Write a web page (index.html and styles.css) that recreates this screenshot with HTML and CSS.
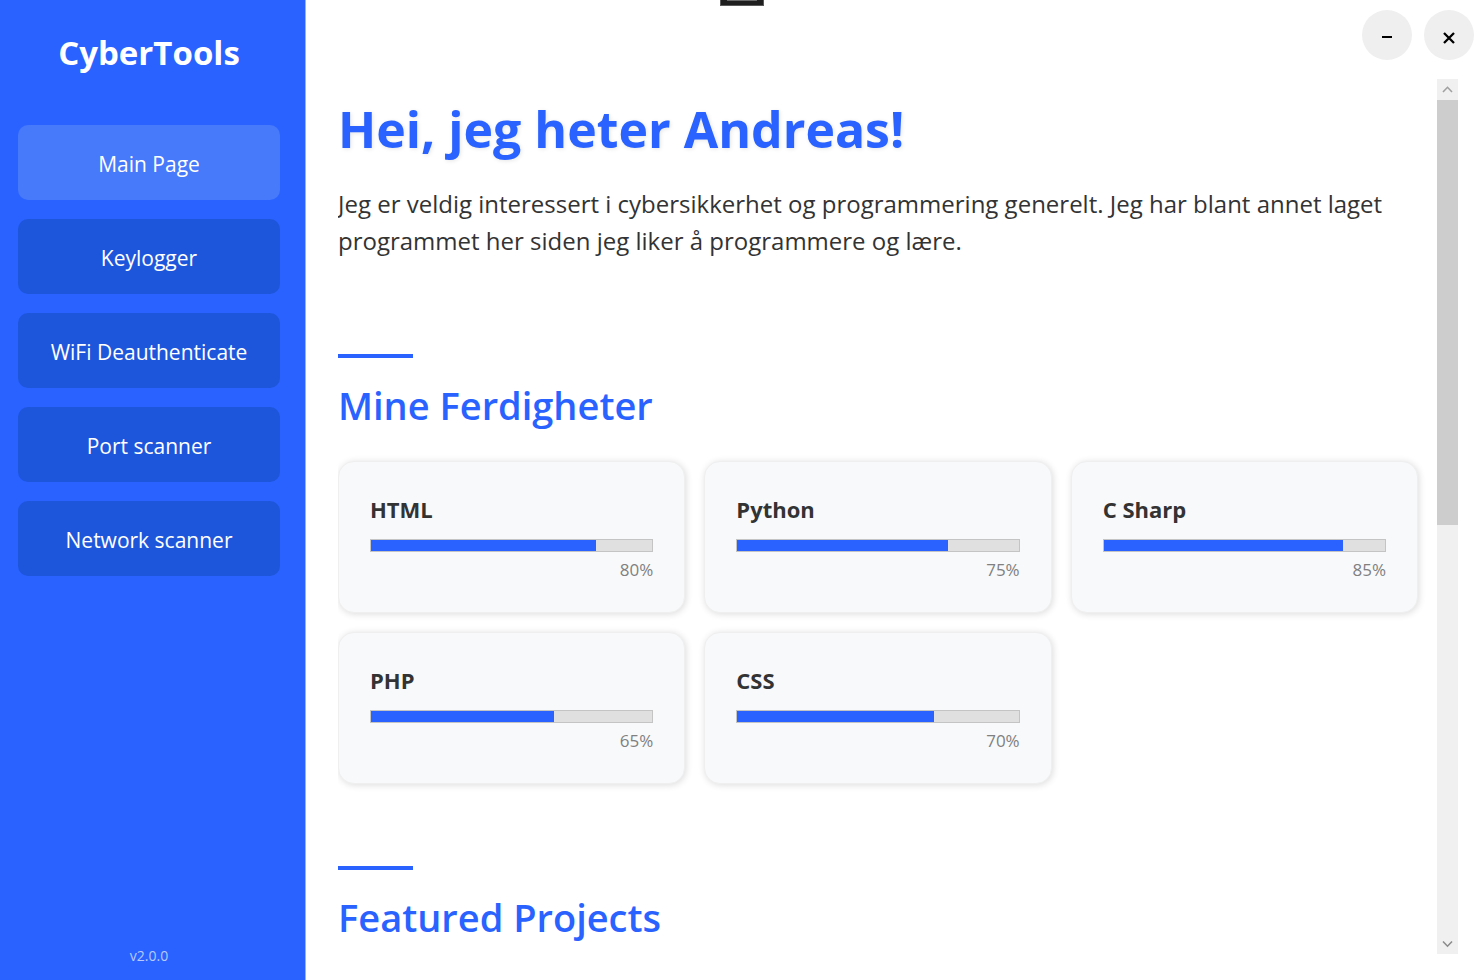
FILE: index.html
```html
<!DOCTYPE html>
<html lang="no">
<head>
<meta charset="utf-8">
<title>CyberTools</title>
<link rel="stylesheet" href="styles.css">
</head>
<body>
<div class="app">
  <aside class="sidebar">
    <div class="brand">CyberTools</div>
    <nav class="nav">
      <button class="nav-item active" type="button">Main Page</button>
      <button class="nav-item" type="button">Keylogger</button>
      <button class="nav-item" type="button">WiFi Deauthenticate</button>
      <button class="nav-item" type="button">Port scanner</button>
      <button class="nav-item" type="button">Network scanner</button>
    </nav>
    <div class="version">v2.0.0</div>
  </aside>

  <main class="main">
    <div class="window-controls">
      <button class="window-button" type="button" aria-label="Minimize">
        <svg width="50" height="50" viewBox="0 0 50 50"><path d="M20 27H30" stroke="#000" stroke-width="2"/></svg>
      </button>
      <button class="window-button" type="button" aria-label="Close">
        <svg width="50" height="50" viewBox="0 0 50 50"><path d="M20 23L30 33M30 23L20 33" stroke="#000" stroke-width="2.300"/></svg>
      </button>
    </div>

    <div class="viewport">
      <div class="content">
        <section class="intro">
          <h1 class="title">Hei, jeg heter Andreas!</h1>
          <p class="lead">Jeg er veldig interessert i cybersikkerhet og programmering generelt. Jeg har blant annet laget programmet her siden jeg liker å programmere og lære.</p>
        </section>

        <section class="section skills">
          <h2 class="heading">Mine Ferdigheter</h2>
          <div class="cards">
            <article class="card">
              <h3 class="skill">HTML</h3>
              <div class="bar"><div class="fill" style="width:80%"></div></div>
              <div class="percent">80%</div>
            </article>
            <article class="card">
              <h3 class="skill">Python</h3>
              <div class="bar"><div class="fill" style="width:75%"></div></div>
              <div class="percent">75%</div>
            </article>
            <article class="card">
              <h3 class="skill">C Sharp</h3>
              <div class="bar"><div class="fill" style="width:85%"></div></div>
              <div class="percent">85%</div>
            </article>
            <article class="card">
              <h3 class="skill">PHP</h3>
              <div class="bar"><div class="fill" style="width:65%"></div></div>
              <div class="percent">65%</div>
            </article>
            <article class="card">
              <h3 class="skill">CSS</h3>
              <div class="bar"><div class="fill" style="width:70%"></div></div>
              <div class="percent">70%</div>
            </article>
          </div>
        </section>

        <section class="section">
          <h2 class="heading">Featured Projects</h2>
        </section>
      </div>

      <div class="scrollbar">
        <button class="scroll-arrow" type="button" aria-label="Scroll up">
          <svg width="21" height="21" viewBox="0 0 21 21"><path d="M6 13L10.500 8.300L15 13" fill="none" stroke="#a0a0a0" stroke-width="1.600"/></svg>
        </button>
        <div class="track"><div class="thumb"></div></div>
        <button class="scroll-arrow" type="button" aria-label="Scroll down">
          <svg width="21" height="21" viewBox="0 0 21 21"><path d="M6 8.500L10.500 13.200L15 8.500" fill="none" stroke="#8c8c8c" stroke-width="1.600"/></svg>
        </button>
      </div>
    </div>
  </main>
  <div class="toolbar-tab"></div>
</div>
</body>
</html>
```
FILE: styles.css
```css
* {
  box-sizing: border-box;
}

body {
  margin: 0;
  background: #fff;
  color: #333;
  font-family: "Open Sans", "Noto Sans", sans-serif;
}

h1, h2, h3, p {
  margin: 0;
}

button {
  border: 0;
  padding: 0;
  font: inherit;
  cursor: pointer;
}

svg {
  display: block;
}

.app {
  position: relative;
  display: flex;
  height: 100vh;
  overflow: hidden;
}

.sidebar {
  flex: none;
  display: flex;
  flex-direction: column;
  width: 306px;
  padding: 28px 25px 12px 18px;
  border-right: 1px solid #94b0ff;
  background: #2962ff;
  color: #fff;
  text-align: center;
}

.brand {
  margin-bottom: 47px;
  font-size: 33px;
  line-height: 50px;
  font-weight: 700;
}

.nav {
  flex: 1;
  display: flex;
  flex-direction: column;
  gap: 19px;
}

.nav-item {
  height: 75px;
  padding-top: 2px;
  border-radius: 10px;
  background: #1e56db;
  color: #fff;
  font-size: 21px;
}

.nav-item.active {
  background: #4779fb;
}

.version {
  font-size: 14px;
  line-height: 24px;
  color: #b8caff;
}

.main {
  flex: 1;
  min-width: 0;
  display: flex;
  flex-direction: column;
  padding: 10px 24px 26px 32px;
}

.window-controls {
  display: flex;
  justify-content: flex-end;
  gap: 12px;
  margin: 0 -16px 19px 0;
}

.window-button {
  width: 50px;
  height: 50px;
  border-radius: 50%;
  background: #efefef;
}

.viewport {
  flex: 1;
  min-height: 0;
  display: flex;
}

.content {
  flex: 1;
  min-width: 0;
  padding: 15px 19px 0 0;
  overflow: hidden;
}

.title {
  font-size: 50px;
  line-height: 70px;
  font-weight: 700;
  color: #2962ff;
  text-shadow: 1px 1px 4px rgba(0, 0, 0, 0.1);
}

.lead {
  margin-top: 21px;
  font-size: 24px;
  line-height: 37px;
}

.section {
  margin-top: 82px;
}

.skills {
  margin-top: 95px;
}

.heading {
  font-size: 38px;
  line-height: 50px;
  font-weight: 600;
  color: #2962ff;
}

.heading::before {
  content: "";
  display: block;
  width: 75px;
  height: 4px;
  margin-bottom: 22px;
  background: #2962ff;
}

.cards {
  display: grid;
  grid-template-columns: repeat(3, 1fr);
  gap: 19px;
  margin-top: 31px;
}

.card {
  height: 152px;
  padding: 31px;
  border: 1px solid #efefef;
  border-radius: 16px;
  background: #f8f9fb;
  box-shadow: 1px 1px 7px rgba(0, 0, 0, 0.14);
}

.skill {
  font-size: 22px;
  line-height: 32px;
  font-weight: 700;
}

.bar {
  height: 13px;
  margin-top: 14px;
  border: 1px solid #c4c4c4;
  background: #e0e0e0;
}

.fill {
  height: 100%;
  background: #2962ff;
}

.percent {
  margin-top: 6px;
  font-size: 17px;
  line-height: 24px;
  text-align: right;
  color: #808080;
}

.scrollbar {
  flex: none;
  display: flex;
  flex-direction: column;
  width: 21px;
  background: #f0f0f0;
}

.scroll-arrow {
  height: 21px;
  background: #f0f0f0;
}

.track {
  flex: 1;
}

.thumb {
  height: 51%;
  background: #cdcdcd;
}

.toolbar-tab {
  position: absolute;
  top: 0;
  left: 720px;
  width: 44px;
  height: 6px;
  border: 1px solid #5a5a5a;
  border-top: 0;
  background: linear-gradient(#6a6a6a, #6a6a6a) center top / 30px 1px no-repeat #1f1f1f;
}
```
